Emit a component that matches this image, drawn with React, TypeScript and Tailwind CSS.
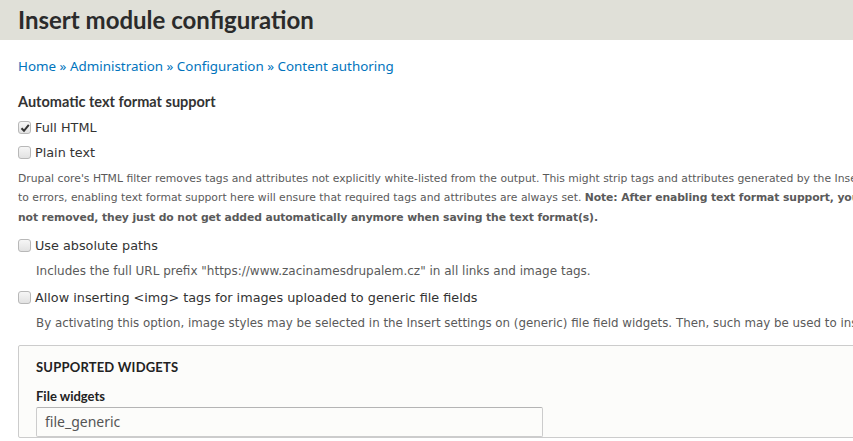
import React from "react";

function Checkbox({ checked }: { checked?: boolean }) {
  return (
    <span className="inline-flex h-[13px] w-[13px] shrink-0 items-center justify-center rounded-[3px] border border-[#b8b8b8] bg-gradient-to-b from-[#f6f6f6] to-[#e2e2e2]">
      {checked && (
        <svg width="10" height="10" viewBox="0 0 10 10">
          <path d="M1.5 5.2 L4 7.8 L8.8 1.8" fill="none" stroke="#333" strokeWidth="2" />
        </svg>
      )}
    </span>
  );
}

function CheckItem({ label, checked }: { label: string; checked?: boolean }) {
  return (
    <div className="flex h-[25px] items-center gap-[4px] whitespace-nowrap">
      <Checkbox checked={checked} />
      <span className="text-[12.8px] text-[#333]">{label}</span>
    </div>
  );
}

export default function App() {
  return (
    <div
      className="h-[441px] w-[853px] overflow-hidden bg-white text-[#333]"
      style={{ fontFamily: '"DejaVu Sans", sans-serif' }}
    >
      <header className="flex h-[40px] items-center bg-[#e0e0d8] px-[18px]">
        <h1
          className="text-[24px] font-bold leading-none text-[#2b2b2b]"
          style={{ fontFamily: "Lato, sans-serif" }}
        >
          Insert module configuration
        </h1>
      </header>

      <div className="px-[18px]">
        <nav
          className="mt-[16px] h-[20px] text-[13.4px] leading-[20px] text-[#0074bd]"
          style={{ fontFamily: '"Noto Sans", sans-serif' }}
        >
          <a>Home</a> » <a>Administration</a> » <a>Configuration</a> » <a>Content authoring</a>
        </nav>

        <div className="mt-[16px]">
          <div
            className="h-[20px] text-[14.5px] font-bold leading-[20px]"
            style={{ fontFamily: "Lato, sans-serif" }}
          >
            Automatic text format support
          </div>
          <div className="mt-[3px]">
            <CheckItem label="Full HTML" checked />
            <CheckItem label="Plain text" />
          </div>
          <p className="mt-[4px] whitespace-nowrap text-[10.8px] leading-[19.3px] text-[#5a5a5a]">
            Drupal core's HTML filter removes tags and attributes not explicitly white-listed from the output. This might strip tags and attributes generated by the Insert module, leading
            <br />
            to errors, enabling text format support here will ensure that required tags and attributes are always set.{" "}
            <strong className="tracking-[-0.1px]">Note: After enabling text format support, you need to save the text format(s). Tags and attributes already set are</strong>
            <br />
            <strong className="tracking-[-0.1px]">not removed, they just do not get added automatically anymore when saving the text format(s).</strong>
          </p>
        </div>

        <div className="mt-[6px]">
          <CheckItem label="Use absolute paths" />
          <p className="mt-[4px] whitespace-nowrap pl-[18px] text-[12px] leading-[19px] text-[#5a5a5a]">
            Includes the full URL prefix "https://www.zacinamesdrupalem.cz" in all links and image tags.
          </p>
        </div>

        <div className="mt-[4px]">
          <CheckItem label="Allow inserting <img> tags for images uploaded to generic file fields" />
          <p className="mt-[4px] whitespace-nowrap pl-[18px] text-[11.85px] leading-[19px] text-[#5a5a5a]">
            By activating this option, image styles may be selected in the Insert settings on (generic) file field widgets. Then, such may be used to insert images.
          </p>
        </div>

        <fieldset className="mt-[12px] w-[900px] rounded-[2px] border border-[#ccc] bg-[#fcfcfa] px-[17px] pt-[11px]">
          <div
            className="h-[20px] text-[13px] font-bold uppercase leading-[20px] tracking-[0.2px] text-[#222]"
            style={{ fontFamily: "Lato, sans-serif" }}
          >
            Supported widgets
          </div>
          <div
            className="mt-[9px] h-[20px] text-[13px] font-bold leading-[20px] text-[#222]"
            style={{ fontFamily: "Lato, sans-serif" }}
          >
            File widgets
          </div>
          <div
            className="mt-[1px] flex h-[30px] w-[507px] items-center rounded-[2px] border border-[#ccc] border-t-[#b4b4b4] bg-[#fcfcfa] px-[8px] text-[14px] text-[#555]"
            style={{ fontFamily: '"Noto Sans", sans-serif' }}
          >
            file_generic
          </div>
        </fieldset>
      </div>
    </div>
  );
}
